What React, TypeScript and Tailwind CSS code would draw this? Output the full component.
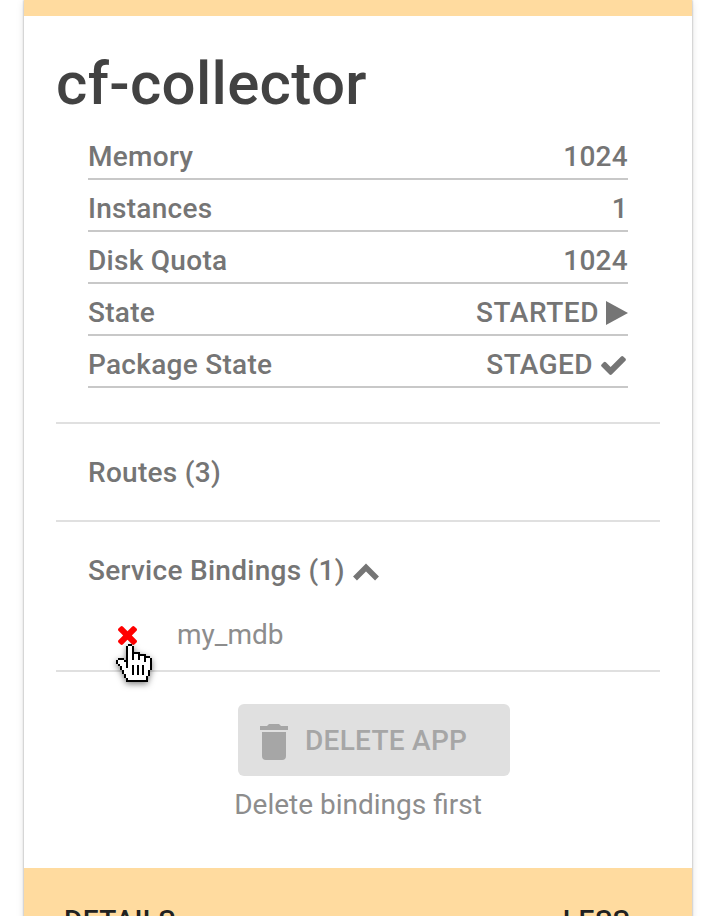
import type { ReactNode } from "react";

const HAND = [
  "......XX..........",
  ".....XooX.........",
  ".....XooX.........",
  ".....XooX.........",
  ".....XooXXXX......",
  ".....XooXooXXXX...",
  ".....XooXooXooXXX.",
  ".XXX.XooXooXooXooX",
  "XoooXXooooooooXooX",
  "XooooXoooooooooooX",
  ".XoooXoooooooooooX",
  "..XooXoooooooooooX",
  "..XooooooooooooooX",
  "...XooooooooooooX.",
  "...XooooooooooooX.",
  "....XoooooooooooX.",
  "....XooooooooooX..",
  ".....XoooooooooX..",
  ".....XXXXXXXXXXX..",
];

function HandCursor() {
  return (
    <svg
      viewBox="0 0 18 19"
      shapeRendering="crispEdges"
      className="absolute left-[28px] top-[38px] h-[38px] w-[36px] drop-shadow-[0_2px_3px_rgba(0,0,0,0.5)]"
    >
      {HAND.flatMap((row, y) =>
        row.split("").map((c, x) =>
          c === "." ? null : (
            <rect key={`${x}-${y}`} x={x} y={y} width="1" height="1" fill={c === "X" ? "#000" : "#fff"} />
          )
        )
      )}
      <path d="M8 10.5h1v5H8zM10.5 10.5h1v5h-1zM13 10.5h1v5h-1z" fill="#000" />
    </svg>
  );
}

function Row({ label, children }: { label: string; children: ReactNode }) {
  return (
    <div className="flex h-[52px] items-center justify-between border-b-2 border-[#c8c8c8] pt-[8px]">
      <span>{label}</span>
      <span className="flex items-center">{children}</span>
    </div>
  );
}

export default function App() {
  return (
    <div className="h-[916px] w-[704px] overflow-hidden bg-white pl-6 font-['Roboto',sans-serif]">
      <div className="h-[940px] w-[668px] bg-white shadow-[0_0_2px_rgba(0,0,0,0.35),0_2px_8px_rgba(0,0,0,0.12)]">
        <div className="h-4 bg-[#ffdb9f]" />
        <div className="flex h-[852px] flex-col px-8 text-[28px] font-medium leading-8 tracking-[0.28px] text-[#757575]">
          <h1 className="h-[112px] pt-[33px] text-[60px] font-medium leading-[70px] tracking-[0.33px] text-[#424242]">
            cf-collector
          </h1>
          <div className="h-[296px] border-b-2 border-[#e0e0e0] px-8">
            <div className="flex flex-col">
              <Row label="Memory">1024</Row>
              <Row label="Instances">1</Row>
              <Row label="Disk Quota">1024</Row>
              <Row label="State">
                <span className="tracking-[0.56px]">STARTED</span>
                <svg viewBox="0 0 22 24" className="ml-[7px] h-6 w-[22px]" fill="currentColor">
                  <path d="M0 0v24l22-12z" />
                </svg>
              </Row>
              <Row label="Package State">
                <span className="tracking-[0.4px]">STAGED</span>
                <svg viewBox="0 0 1550 1188" className="ml-[8px] mr-[2px] h-[19px] w-[25px]" fill="currentColor">
                  <path d="M1550 232q0 40-28 68L662 1160q-28 28-68 28t-68-28L28 662Q0 634 0 594t28-68l136-136q28-28 68-28t68 28l294 295L1250 28q28-28 68-28t68 28l136 136q28 28 28 68z" />
                </svg>
              </Row>
            </div>
          </div>
          <div className="flex h-[98px] items-center border-b-2 border-[#e0e0e0] pl-8 pt-[2px]">Routes (3)</div>
          <div className="h-[150px] border-b-2 border-[#e0e0e0] pl-8 pt-[33px]">
            <div className="flex h-8 items-center">
              Service Bindings (1)
              <svg viewBox="0 0 26 18" className="ml-[8px] mt-[2px] h-[18px] w-[26px]" fill="none" stroke="currentColor" strokeWidth="5.5">
                <path d="M2 15.5 13 4.5l11 11" />
              </svg>
            </div>
            <div className="relative mt-[19px] flex h-[58px] items-center font-normal tracking-normal text-[#8d8d8d]">
              <svg viewBox="0 0 1188 1188" className="ml-[30px] mr-[40px] h-[19px] w-[19px] text-[#ff0000]" fill="currentColor">
                <path d="M1188 956q0 40-28 68l-136 136q-28 28-68 28t-68-28L594 866l-294 294q-28 28-68 28t-68-28L28 1024Q0 996 0 956t28-68l294-294L28 300Q0 272 0 232t28-68L164 28q28-28 68-28t68 28l294 294L888 28q28-28 68-28t68 28l136 136q28 28 28 68t-28 68L866 594l294 294q28 28 28 68z" />
              </svg>
              my_mdb
              <HandCursor />
            </div>
          </div>
          <div className="mt-8 flex flex-col items-center">
            <button className="ml-8 flex h-[72px] w-[272px] items-center rounded-[6px] bg-[#e0e0e0] pl-[22px] font-medium text-[#a6a6a6]">
              <svg viewBox="0 0 28 36" className="mt-[4px] h-9 w-7" fill="currentColor">
                <path d="M2 8h24v24q0 4-4 4H6q-4 0-4-4zM0 2h7l2-2h10l2 2h7v4H0z" />
              </svg>
              <span className="ml-[17px] mt-[2px]">DELETE APP</span>
            </button>
            <div className="mt-[13px] font-normal tracking-normal text-[#8d8d8d]">Delete bindings first</div>
          </div>
        </div>
        <div className="flex h-[80px] justify-between bg-[#ffdb9f] px-10 pt-[37px] text-[28px] font-medium leading-8 tracking-[0.42px] text-[#212121]">
          <span>DETAILS</span>
          <span className="mr-[22px] tracking-[0.6px]">LESS</span>
        </div>
      </div>
    </div>
  );
}
